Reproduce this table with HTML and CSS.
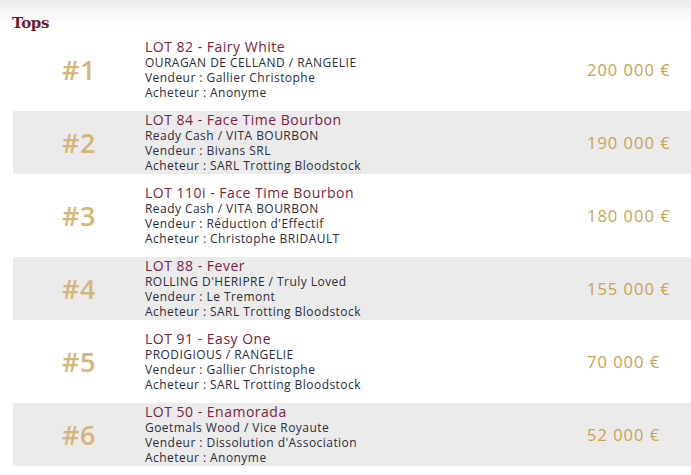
FILE: index.html
```html
<!DOCTYPE html>
<html lang="fr">
<head>
<meta charset="utf-8">
<title>Tops</title>
<link rel="stylesheet" href="styles.css">
</head>
<body>
<div class="page">
  <h2 class="heading">Tops</h2>
  <div class="list">
    <div class="row">
      <div class="rank">#1</div>
      <div class="info">
        <div class="lot">LOT 82 - Fairy White</div>
        <div class="line">OURAGAN DE CELLAND / RANGELIE</div>
        <div class="line">Vendeur : Gallier Christophe</div>
        <div class="line">Acheteur : Anonyme</div>
      </div>
      <div class="price">200 000 €</div>
    </div>
    <div class="row alt">
      <div class="rank">#2</div>
      <div class="info">
        <div class="lot">LOT 84 - Face Time Bourbon</div>
        <div class="line">Ready Cash / VITA BOURBON</div>
        <div class="line">Vendeur : Bivans SRL</div>
        <div class="line">Acheteur : SARL Trotting Bloodstock</div>
      </div>
      <div class="price">190 000 €</div>
    </div>
    <div class="row">
      <div class="rank">#3</div>
      <div class="info">
        <div class="lot">LOT 110i - Face Time Bourbon</div>
        <div class="line">Ready Cash / VITA BOURBON</div>
        <div class="line">Vendeur : Réduction d'Effectif</div>
        <div class="line">Acheteur : Christophe BRIDAULT</div>
      </div>
      <div class="price">180 000 €</div>
    </div>
    <div class="row alt">
      <div class="rank">#4</div>
      <div class="info">
        <div class="lot">LOT 88 - Fever</div>
        <div class="line">ROLLING D'HERIPRE / Truly Loved</div>
        <div class="line">Vendeur : Le Tremont</div>
        <div class="line">Acheteur : SARL Trotting Bloodstock</div>
      </div>
      <div class="price">155 000 €</div>
    </div>
    <div class="row">
      <div class="rank">#5</div>
      <div class="info">
        <div class="lot">LOT 91 - Easy One</div>
        <div class="line">PRODIGIOUS / RANGELIE</div>
        <div class="line">Vendeur : Gallier Christophe</div>
        <div class="line">Acheteur : SARL Trotting Bloodstock</div>
      </div>
      <div class="price">70 000 €</div>
    </div>
    <div class="row alt">
      <div class="rank">#6</div>
      <div class="info">
        <div class="lot">LOT 50 - Enamorada</div>
        <div class="line">Goetmals Wood / Vice Royaute</div>
        <div class="line">Vendeur : Dissolution d'Association</div>
        <div class="line">Acheteur : Anonyme</div>
      </div>
      <div class="price">52 000 €</div>
    </div>
  </div>
</div>
</body>
</html>
```
FILE: styles.css
```css
html, body {
  margin: 0;
  padding: 0;
  background: #ffffff;
}

body {
  font-family: "Open Sans", "Noto Sans", sans-serif;
  color: #2b2b3a;
  overflow: hidden;
}

.page {
  background: linear-gradient(to bottom, #ebebeb 0px, #f8f8f8 14px, #ffffff 28px);
  padding-top: 13px;
  min-height: 475px;
}

.heading {
  margin: 0 0 5px 12px;
  font-family: "DejaVu Serif", "Liberation Serif", serif;
  font-weight: bold;
  font-size: 15px;
  line-height: 20px;
  color: #6e1c2c;
  letter-spacing: -0.3px;
}

.list {
  display: flex;
  flex-direction: column;
  gap: 10px;
  margin-left: 13px;
}

.row {
  display: grid;
  grid-template-columns: 132px 442px 1fr;
  align-items: center;
  height: 63px;
  background: #ffffff;
}

.row.alt {
  background: #ebebeb;
}

.rank {
  text-align: center;
  font-size: 27px;
  font-weight: 600;
  color: #d5b67a;
  line-height: 1;
  letter-spacing: 0.5px;
}

.info {
  align-self: start;
  padding-top: 1px;
}

.lot {
  font-size: 14px;
  line-height: 16px;
  color: #7b2342;
  letter-spacing: 0.5px;
}

.line {
  font-size: 12px;
  line-height: 15px;
  color: #2b2b3a;
  letter-spacing: 0.45px;
}

.price {
  font-size: 16.5px;
  color: #c9a24f;
  letter-spacing: 1px;
}
```
